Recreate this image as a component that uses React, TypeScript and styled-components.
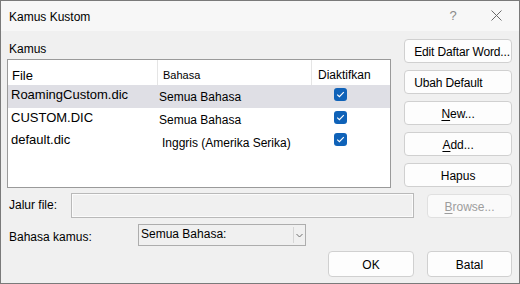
import React from 'react'
import styled, { createGlobalStyle } from 'styled-components'

const GlobalStyle = createGlobalStyle`
  * {
    box-sizing: border-box;
  }
  body {
    margin: 0;
    background: #f0f0f0;
    font-family: 'Liberation Sans', Arial, sans-serif;
    color: #000;
  }
`

const Window = styled.div`
  width: 520px;
  height: 284px;
  border: 1px solid #7a7a7a;
  background: #f0f0f0;
  display: flex;
  flex-direction: column;
  overflow: hidden;
`

const TitleBar = styled.div`
  height: 30px;
  flex-shrink: 0;
  background: #f7f7f7;
  display: flex;
  align-items: center;
  padding: 2px 17px 0 8px;
`

const Title = styled.div`
  flex: 1;
  font-size: 12px;
  line-height: 15px;
`

const TitleControl = styled.div<{ $gap?: number }>`
  width: 12px;
  height: 26px;
  margin: -3px ${({ $gap }) => $gap ?? 0}px 0 0;
  display: flex;
  align-items: center;
  justify-content: center;
  color: #8a8a8a;
  font-size: 13px;
`

const Body = styled.div`
  flex: 1;
  display: flex;
  flex-direction: column;
  padding: 8px 7px 0 6px;
`

const TopSection = styled.div`
  display: flex;
  gap: 13px;
`

const DictGroup = styled.div`
  width: 385px;
  display: flex;
  flex-direction: column;
`

const GroupLabel = styled.div`
  height: 20px;
  padding: 3px 0 0 2px;
  font-size: 12px;
  line-height: 15px;
`

const ListBox = styled.div`
  height: 129px;
  border: 1px solid #9a9a9a;
  background: #fff;
`

const HeaderRow = styled.div`
  display: grid;
  grid-template-columns: 150px 154px 1fr;
  height: 25px;
`

const HeaderCell = styled.div<{ $divider?: boolean; $size: number; $pad: number }>`
  border-right: ${({ $divider }) => ($divider ? '1px solid #e5e5e5' : 'none')};
  padding: 8px 0 0 ${({ $pad }) => $pad}px;
  font-size: ${({ $size }) => $size}px;
  line-height: 15px;
  white-space: nowrap;
`

const Row = styled.div<{ $selected?: boolean; $height: number }>`
  display: grid;
  grid-template-columns: 150px 154px 1fr;
  height: ${({ $height }) => $height}px;
  background: ${({ $selected }) => ($selected ? '#dfdfe5' : 'transparent')};
`

const FileCell = styled.div`
  padding: 2px 0 0 3px;
  font-size: 13px;
  line-height: 16px;
  white-space: nowrap;
`

const LangCell = styled.div<{ $pad: number; $top: number }>`
  padding: ${({ $top }) => $top}px 0 0 ${({ $pad }) => $pad}px;
  font-size: 12px;
  line-height: 16px;
  white-space: nowrap;
`

const CheckCell = styled.div`
  padding: 3px 0 0 22px;
`

const CheckBox = styled.div`
  width: 13px;
  height: 13px;
  border-radius: 3px;
  background: #0f62b8;
  display: flex;
  align-items: center;
  justify-content: center;
`

const ButtonColumn = styled.div`
  width: 108px;
  display: flex;
  flex-direction: column;
  gap: 7px;
`

const DialogButton = styled.div<{ $align?: 'left' | 'center'; $disabled?: boolean; $width?: number; $height?: number }>`
  width: ${({ $width }) => ($width ? `${$width}px` : '100%')};
  height: ${({ $height }) => $height ?? 24}px;
  flex-shrink: 0;
  border: 1px solid ${({ $disabled }) => ($disabled ? '#e0e0e0' : '#d0d0d0')};
  border-radius: 4px;
  background: ${({ $disabled }) => ($disabled ? '#fafafa' : '#fdfdfd')};
  color: ${({ $disabled }) => ($disabled ? '#9d9d9d' : '#000')};
  display: flex;
  align-items: center;
  justify-content: ${({ $align }) => ($align === 'left' ? 'flex-start' : 'center')};
  padding: 3px ${({ $align }) => ($align === 'left' ? '0 0 9px' : '0 0 0')};
  font-size: 12px;
  line-height: 15px;
  white-space: nowrap;
  letter-spacing: ${({ $align }) => ($align === 'left' ? '-0.15px' : '0')};
`

const Key = styled.span`
  text-decoration: underline;
  text-underline-offset: 2px;
`

const FieldRow = styled.div<{ $top: number; $height: number }>`
  display: flex;
  align-items: center;
  margin-top: ${({ $top }) => $top}px;
  height: ${({ $height }) => $height}px;
`

const FieldLabel = styled.div<{ $width: number; $shift?: number }>`
  width: ${({ $width }) => $width}px;
  flex-shrink: 0;
  padding: ${({ $shift }) => $shift ?? 0}px 0 0 2px;
  font-size: 12px;
  line-height: 15px;
`

const PathInput = styled.div`
  width: 343px;
  height: 25px;
  border: 1px solid #b9b9b9;
  box-shadow: inset 0 0 0 1px #fbfbfb;
  background: #f0f0f0;
  margin-right: 13px;
`

const Select = styled.div`
  width: 168px;
  height: 22px;
  border: 1px solid #adadad;
  background: #f0f0f0;
  display: flex;
  align-items: center;
`

const SelectValue = styled.div`
  flex: 1;
  padding: 0 0 1px 2px;
  font-size: 12px;
  line-height: 15px;
`

const SelectArrow = styled.div`
  width: 11px;
  height: 16px;
  border-left: 1px solid #d6d6d6;
  display: flex;
  align-items: center;
  justify-content: center;
  margin-right: 1px;
`

const FooterRow = styled.div`
  display: flex;
  justify-content: flex-end;
  gap: 13px;
  margin-top: 5px;
`

const Check = () => (
  <CheckBox>
    <svg width="9" height="7" viewBox="0 0 9 7">
      <path d="M1.2 3.6 L3.4 5.6 L7.8 1.2" fill="none" stroke="#fff" strokeWidth="1.2" />
    </svg>
  </CheckBox>
)

const dictionaries = [
  { file: 'RoamingCustom.dic', lang: 'Semua Bahasa', pad: 1, top: 4, height: 23, selected: true },
  { file: 'CUSTOM.DIC', lang: 'Semua Bahasa', pad: 1, top: 4, height: 22, selected: false },
  { file: 'default.dic', lang: 'Inggris (Amerika Serika)', pad: 4, top: 5, height: 22, selected: false },
]

export default function App() {
  return (
    <>
      <GlobalStyle />
      <Window>
        <TitleBar>
          <Title>Kamus Kustom</Title>
          <TitleControl $gap={31}>?</TitleControl>
          <TitleControl>
            <svg width="11" height="11" viewBox="0 0 11 11">
              <path d="M0.5 0.5 L10.5 10.5 M10.5 0.5 L0.5 10.5" stroke="#6a6a6a" strokeWidth="1" fill="none" />
            </svg>
          </TitleControl>
        </TitleBar>
        <Body>
          <TopSection>
            <DictGroup>
              <GroupLabel>Kamus</GroupLabel>
              <ListBox>
                <HeaderRow>
                  <HeaderCell $divider $size={13} $pad={4}>File</HeaderCell>
                  <HeaderCell $divider $size={11} $pad={5}>Bahasa</HeaderCell>
                  <HeaderCell $size={12} $pad={6}>Diaktifkan</HeaderCell>
                </HeaderRow>
                {dictionaries.map((d) => (
                  <Row key={d.file} $selected={d.selected} $height={d.height}>
                    <FileCell>{d.file}</FileCell>
                    <LangCell $pad={d.pad} $top={d.top}>{d.lang}</LangCell>
                    <CheckCell>
                      <Check />
                    </CheckCell>
                  </Row>
                ))}
              </ListBox>
            </DictGroup>
            <ButtonColumn>
              <DialogButton $align="left">Edit Daftar Word...</DialogButton>
              <DialogButton $align="left">Ubah Default</DialogButton>
              <DialogButton><Key>N</Key>ew...</DialogButton>
              <DialogButton><Key>A</Key>dd...</DialogButton>
              <DialogButton>Hapus</DialogButton>
            </ButtonColumn>
          </TopSection>

          <FieldRow $top={5} $height={25}>
            <FieldLabel $width={64}>Jalur file:</FieldLabel>
            <PathInput />
            <DialogButton $disabled $width={85}><Key>B</Key>rowse...</DialogButton>
          </FieldRow>

          <FieldRow $top={6} $height={22}>
            <FieldLabel $width={131} $shift={4}>Bahasa kamus:</FieldLabel>
            <Select>
              <SelectValue>Semua Bahasa:</SelectValue>
              <SelectArrow>
                <svg width="7" height="5" viewBox="0 0 7 5">
                  <path d="M0.5 1 L3.5 4 L6.5 1" fill="none" stroke="#707070" strokeWidth="1" />
                </svg>
              </SelectArrow>
            </Select>
          </FieldRow>

          <FooterRow>
            <DialogButton $width={86} $height={26}>OK</DialogButton>
            <DialogButton $width={85} $height={26}>Batal</DialogButton>
          </FooterRow>
        </Body>
      </Window>
    </>
  )
}
